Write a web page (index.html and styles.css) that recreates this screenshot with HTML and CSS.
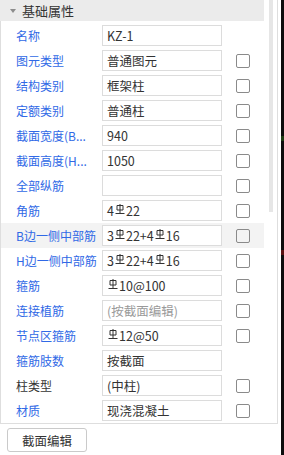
FILE: index.html
```html
<!DOCTYPE html>
<html lang="zh-CN">

<head>
    <meta charset="UTF-8" />
    <meta name="viewport" content="width=device-width, initial-scale=1.0" />
    <title>属性列表</title>

    <link rel="stylesheet" href="styles.css">
</head>

<body>
    <div class="screen">
        <div class="side">
            <div class="panel">
                <div class="props">
                    <div class="group-head">
                        <span class="caret"></span>
                        <span class="group-title">基础属性</span>
                    </div>

                    <div class="row">
                        <span class="label">名称</span>
                        <span class="value">KZ-1</span>
                    </div>
                    <div class="row">
                        <span class="label">图元类型</span>
                        <span class="value">普通图元</span>
                        <span class="check"></span>
                    </div>
                    <div class="row">
                        <span class="label">结构类别</span>
                        <span class="value">框架柱</span>
                        <span class="check"></span>
                    </div>
                    <div class="row">
                        <span class="label">定额类别</span>
                        <span class="value">普通柱</span>
                        <span class="check"></span>
                    </div>
                    <div class="row">
                        <span class="label">截面宽度(B...</span>
                        <span class="value">940</span>
                        <span class="check"></span>
                    </div>
                    <div class="row">
                        <span class="label">截面高度(H...</span>
                        <span class="value">1050</span>
                        <span class="check"></span>
                    </div>
                    <div class="row">
                        <span class="label">全部纵筋</span>
                        <span class="value"></span>
                        <span class="check"></span>
                    </div>
                    <div class="row">
                        <span class="label">角筋</span>
                        <span class="value">4<svg class="bar" viewBox="0 0 10 11"><path d="M2 1.5h6v4.5h-6z M5 0v9.5 M0.5 9.5h9" /></svg>22</span>
                        <span class="check"></span>
                    </div>
                    <div class="row is-active">
                        <span class="label">B边一侧中部筋</span>
                        <span class="value">3<svg class="bar" viewBox="0 0 10 11"><path d="M2 1.5h6v4.5h-6z M5 0v9.5 M0.5 9.5h9" /></svg>22+4<svg class="bar" viewBox="0 0 10 11"><path d="M2 1.5h6v4.5h-6z M5 0v9.5 M0.5 9.5h9" /></svg>16</span>
                        <span class="check"></span>
                    </div>
                    <div class="row">
                        <span class="label">H边一侧中部筋</span>
                        <span class="value">3<svg class="bar" viewBox="0 0 10 11"><path d="M2 1.5h6v4.5h-6z M5 0v9.5 M0.5 9.5h9" /></svg>22+4<svg class="bar" viewBox="0 0 10 11"><path d="M2 1.5h6v4.5h-6z M5 0v9.5 M0.5 9.5h9" /></svg>16</span>
                        <span class="check"></span>
                    </div>
                    <div class="row">
                        <span class="label">箍筋</span>
                        <span class="value"><svg class="bar" viewBox="0 0 10 11"><path d="M2 1.5h6v4.5h-6z M5 0v9.5 M0.5 9.5h9" /></svg>10@100</span>
                        <span class="check"></span>
                    </div>
                    <div class="row">
                        <span class="label">连接植筋</span>
                        <span class="value muted">(按截面编辑)</span>
                        <span class="check"></span>
                    </div>
                    <div class="row">
                        <span class="label">节点区箍筋</span>
                        <span class="value"><svg class="bar" viewBox="0 0 10 11"><path d="M2 1.5h6v4.5h-6z M5 0v9.5 M0.5 9.5h9" /></svg>12@50</span>
                        <span class="check"></span>
                    </div>
                    <div class="row">
                        <span class="label">箍筋肢数</span>
                        <span class="value">按截面</span>
                    </div>
                    <div class="row">
                        <span class="label plain">柱类型</span>
                        <span class="value">(中柱)</span>
                        <span class="check"></span>
                    </div>
                    <div class="row">
                        <span class="label">材质</span>
                        <span class="value">现浇混凝土</span>
                        <span class="check"></span>
                    </div>
                </div>
                <div class="scroll">
                    <div class="thumb"></div>
                </div>
            </div>
            <button type="button" class="edit-btn">截面编辑</button>
        </div>
        <div class="canvas"></div>
    </div>
</body>

</html>
```

FILE: styles.css
```css
* {
    box-sizing: border-box;
    margin: 0;
    padding: 0;
}

html {
    font-family: "Noto Sans CJK SC", "Noto Sans", sans-serif;
}

body {
    background: #fff;
    color: #333;
    height: 455px;
    overflow: hidden;
    width: 284px;
}

.screen {
    display: flex;
    height: 100%;
}

.side {
    width: 281px;
}

.panel {
    border: 1px solid #dedede;
    border-top: none;
    display: flex;
    height: 424px;
    width: 278px;
}

.props {
    width: 263px;
}

.group-head {
    align-items: center;
    background: #ebebeb;
    display: flex;
    height: 21px;
    margin-left: -1px;
    margin-bottom: 2px;
}

.caret {
    border-left: 3px solid transparent;
    border-right: 3px solid transparent;
    border-top: 4px solid #8c8c8c;
    height: 0;
    margin-left: 10px;
    width: 0;
}

.group-title {
    font-size: 13px;
    margin-left: 6px;
}

.row {
    align-items: center;
    display: flex;
    height: 25px;
    padding-left: 15px;
}

.row.is-active {
    background: #f3f3f3;
}

.label {
    color: #3069e6;
    font-size: 12px;
    white-space: nowrap;
    width: 86px;
}

.label.plain {
    color: #333;
}

.value {
    align-items: center;
    background: #fff;
    border: 1px solid #dcdcdc;
    display: flex;
    font-size: 12.5px;
    height: 21px;
    padding-left: 4px;
    white-space: nowrap;
    width: 120px;
}

.value.muted {
    color: #9a9a9a;
}

.bar {
    fill: none;
    height: 11px;
    margin: -3px 1px 0;
    stroke: #333;
    stroke-width: 1;
    width: 10px;
}

.check {
    border: 1px solid #8a8a8a;
    border-radius: 2px;
    height: 14px;
    margin-left: 14px;
    width: 14px;
}

.scroll {
    padding-left: 5px;
    width: 13px;
}

.thumb {
    background: #e6e6e6;
    height: 212px;
    width: 4px;
}

.edit-btn {
    background: #fff;
    border: 1px solid #cacaca;
    border-radius: 3px;
    color: #333;
    font-family: inherit;
    font-size: 12.5px;
    height: 24px;
    margin: 4px 0 0 7px;
    width: 80px;
}

.canvas {
    background: linear-gradient(#0d0d0d 0 30%, #1d3b12 30% 31%, #0d0d0d 31% 55%, #5a1010 55% 56%, #0d0d0d 56%);
    flex: 1;
}
```
